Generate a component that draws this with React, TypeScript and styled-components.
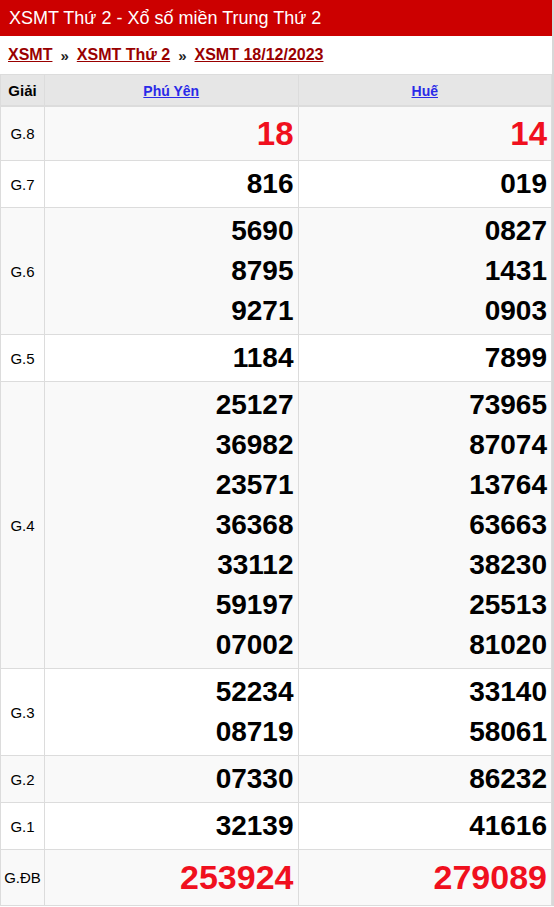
import React from "react";
import styled, { createGlobalStyle } from "styled-components";

const Global = createGlobalStyle`
  html, body { margin: 0; padding: 0; background: #fff; }
  body { font-family: "Liberation Sans", Arial, sans-serif; }
`;

const Page = styled.div`
  width: 552px;
  border-right: 2px solid #d8d8d8;
`;

const TitleBar = styled.h1`
  margin: 0;
  height: 36px;
  background: #cc0000;
  color: #fff;
  font-size: 18px;
  font-weight: normal;
  line-height: 36px;
  padding: 0 9px;
  white-space: nowrap;
`;

const Crumbs = styled.nav`
  display: flex;
  align-items: center;
  gap: 8px;
  height: 38px;
  padding: 0 8px;
  font-size: 16px;
  font-weight: bold;
`;

const Crumb = styled.a`
  color: #990000;
  text-decoration: underline;
`;

const Sep = styled.span`
  color: #222;
  font-size: 15px;
`;

const Table = styled.table`
  width: 552px;
  border-collapse: collapse;
  table-layout: fixed;
`;

const HeadCell = styled.th<{ $w?: number }>`
  ${(p) => (p.$w ? `width: ${p.$w}px;` : "")}
  background: #e6e6e6;
  border: 1px solid #dcdcdc;
  border-bottom: 2px solid #dcdcdc;
  height: 30px;
  padding: 0;
  font-size: 15px;
  font-weight: bold;
  color: #000;
  text-align: center;
`;

const HeadLink = styled.a`
  color: #2a2ae8;
  font-size: 14px;
  font-weight: bold;
  text-decoration: underline;
`;

const Row = styled.tr<{ $alt: boolean }>`
  background: ${(p) => (p.$alt ? "#f9f9f9" : "#ffffff")};
`;

const Label = styled.td`
  border: 1px solid #dcdcdc;
  text-align: center;
  font-size: 15px;
  color: #000;
  padding: 0;
`;

const NumCell = styled.td`
  border: 1px solid #dcdcdc;
  text-align: right;
  padding: 3px 4px 3px 0;
  vertical-align: middle;
`;

const Num = styled.div<{ $size: "big" | "normal" | "special" }>`
  font-weight: bold;
  color: ${(p) => (p.$size === "normal" ? "#000" : "#f0101e")};
  font-size: ${(p) => (p.$size === "normal" ? 28 : p.$size === "big" ? 33 : 34)}px;
  line-height: ${(p) => (p.$size === "normal" ? 40 : p.$size === "big" ? 47 : 49)}px;
`;

type Prize = { label: string; a: string[]; b: string[]; size: "big" | "normal" | "special" };

const prizes: Prize[] = [
  { label: "G.8", a: ["18"], b: ["14"], size: "big" },
  { label: "G.7", a: ["816"], b: ["019"], size: "normal" },
  { label: "G.6", a: ["5690", "8795", "9271"], b: ["0827", "1431", "0903"], size: "normal" },
  { label: "G.5", a: ["1184"], b: ["7899"], size: "normal" },
  {
    label: "G.4",
    a: ["25127", "36982", "23571", "36368", "33112", "59197", "07002"],
    b: ["73965", "87074", "13764", "63663", "38230", "25513", "81020"],
    size: "normal",
  },
  { label: "G.3", a: ["52234", "08719"], b: ["33140", "58061"], size: "normal" },
  { label: "G.2", a: ["07330"], b: ["86232"], size: "normal" },
  { label: "G.1", a: ["32139"], b: ["41616"], size: "normal" },
  { label: "G.ĐB", a: ["253924"], b: ["279089"], size: "special" },
];

export default function App() {
  return (
    <>
      <Global />
      <Page>
        <TitleBar>XSMT Thứ 2 - Xổ số miền Trung Thứ 2</TitleBar>
        <Crumbs>
          <Crumb href="#">XSMT</Crumb>
          <Sep>»</Sep>
          <Crumb href="#">XSMT Thứ 2</Crumb>
          <Sep>»</Sep>
          <Crumb href="#">XSMT 18/12/2023</Crumb>
        </Crumbs>
        <Table>
          <thead>
            <tr>
              <HeadCell $w={43}>Giải</HeadCell>
              <HeadCell>
                <HeadLink href="#">Phú Yên</HeadLink>
              </HeadCell>
              <HeadCell>
                <HeadLink href="#">Huế</HeadLink>
              </HeadCell>
            </tr>
          </thead>
          <tbody>
            {prizes.map((p, i) => (
              <Row key={p.label} $alt={i % 2 === 0}>
                <Label>{p.label}</Label>
                <NumCell>
                  {p.a.map((n) => (
                    <Num key={n} $size={p.size}>{n}</Num>
                  ))}
                </NumCell>
                <NumCell>
                  {p.b.map((n) => (
                    <Num key={n} $size={p.size}>{n}</Num>
                  ))}
                </NumCell>
              </Row>
            ))}
          </tbody>
        </Table>
      </Page>
    </>
  );
}
